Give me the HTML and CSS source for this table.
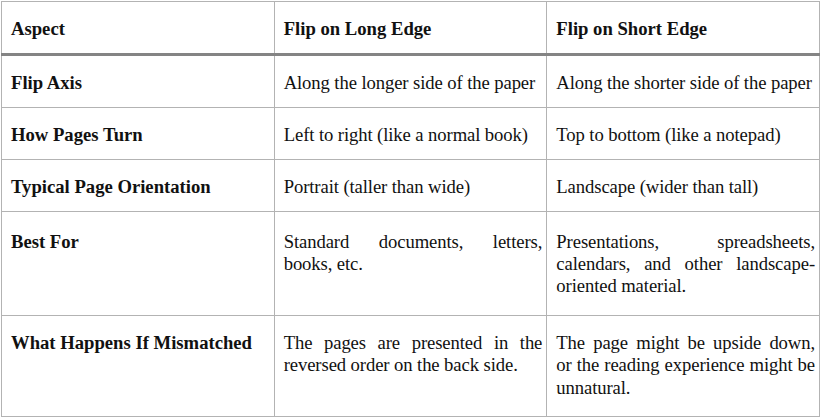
FILE: index.html
```html
<!DOCTYPE html>
<html lang="en">
<head>
<meta charset="utf-8">
<title>Flip on Long Edge vs Short Edge</title>
<link rel="stylesheet" href="styles.css">
</head>
<body>
<table class="cmp">
  <colgroup><col class="c1"><col class="c2"><col class="c3"></colgroup>
  <thead>
    <tr><th>Aspect</th><th>Flip on Long Edge</th><th>Flip on Short Edge</th></tr>
  </thead>
  <tbody>
    <tr><td class="key">Flip Axis</td><td>Along the longer side of the paper</td><td>Along the shorter side of the paper</td></tr>
    <tr><td class="key">How Pages Turn</td><td>Left to right (like a normal book)</td><td>Top to bottom (like a notepad)</td></tr>
    <tr><td class="key">Typical Page Orientation</td><td>Portrait (taller than wide)</td><td>Landscape (wider than tall)</td></tr>
    <tr class="tall first"><td class="key">Best For</td><td>Standard documents, letters, books, etc.</td><td>Presentations, spreadsheets, calendars, and other landscape-oriented material.</td></tr>
    <tr class="tall"><td class="key">What Happens If Mismatched</td><td>The pages are presented in the reversed order on the back side.</td><td>The page might be upside down, or the reading experience might be unnatural.</td></tr>
  </tbody>
</table>
</body>
</html>
```
FILE: styles.css
```css
html, body {
  margin: 0;
  padding: 0;
  background: #fff;
}
body {
  font-family: "Liberation Serif", "Times New Roman", serif;
  font-size: 18.67px;
  color: #111;
}
.cmp {
  margin: 1px;
  width: 819px;
  border-collapse: collapse;
  table-layout: fixed;
}
.cmp th,
.cmp td {
  border: 1px solid #b3b3b3;
  padding: 16px 4px 12.5px 9px;
  line-height: 22.4px;
  text-align: justify;
  vertical-align: baseline;
}
.cmp td {
  letter-spacing: -0.1px;
}
.cmp th {
  font-weight: bold;
  text-align: left;
  border-bottom: 3px solid #848484;
}
.cmp td.key {
  font-weight: bold;
  text-align: left;
  letter-spacing: 0;
}
.cmp tr.tall td {
  padding-top: 16px;
  padding-bottom: 17px;
}
.cmp tr.tall.first td {
  padding-top: 19px;
}
```
